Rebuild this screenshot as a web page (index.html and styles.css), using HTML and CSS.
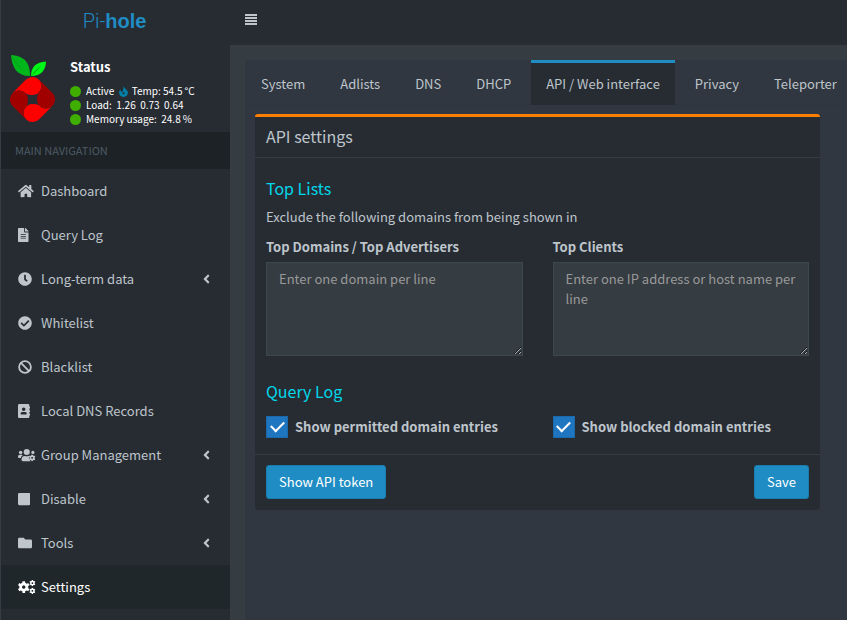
FILE: index.html
```html
<!DOCTYPE html>
<html lang="en">
<head>
<meta charset="utf-8">
<meta name="viewport" content="width=device-width, initial-scale=1">
<title>Pi-hole - Settings</title>
<link rel="stylesheet" href="styles.css">
</head>
<body>
<svg class="defs" aria-hidden="true">
  <symbol id="angle" viewBox="0 0 256 512"><path d="M31.7 239l136-136c9.4-9.4 24.6-9.4 33.9 0l22.6 22.6c9.4 9.4 9.4 24.6 0 33.9L127.9 256l96.4 96.4c9.4 9.4 9.4 24.6 0 33.9L201.7 409c-9.4 9.4-24.6 9.4-33.9 0l-136-136c-9.5-9.4-9.5-24.6-.1-34z"/></symbol>
  <symbol id="gear6" viewBox="-100 -100 200 200">
    <circle r="52" fill="none" stroke="currentColor" stroke-width="46"/>
    <path id="teeth" d="M-22-98h44v40h-44zM-22 58h44v40h-44z"/>
    <use href="#teeth" transform="rotate(60)"/><use href="#teeth" transform="rotate(120)"/>
  </symbol>
</svg>
<aside class="sidebar">
  <a class="logo" href="#">Pi-<b>hole</b></a>
  <section class="user-panel">
    <svg class="pihole" viewBox="0 0 46 68" aria-hidden="true">
      <path fill="#00b61b" d="M21 21C8 21 3 13 2 0c12 1 19 6 19 21z"/>
      <path fill="#008a13" d="M21 21C13 16 7 9 2 0c6 9 11 16 19 21z"/>
      <path fill="#00f615" d="M22 21c0-9 5-14 15-14.500C37 15 32 21 22 21z"/>
      <path fill="#009914" d="M22 21c4-5 7-8 10-10-3 3-6 7-10 10z"/>
      <g transform="translate(23.5 44.5)">
        <path id="petal" fill="#f00" d="M-6.400-19.900A9 9 0 1 1 0-4.500Q-4-4.500-6.500-5.700A9 9 0 0 0-19.900-6.400Z"/>
        <path fill="#f00" transform="rotate(180)" d="M-6.400-19.900A9 9 0 1 1 0-4.500Q-4-4.500-6.500-5.700A9 9 0 0 0-19.900-6.400Z"/>
        <path fill="#a00000" transform="rotate(90)" d="M-6.400-19.900A9 9 0 1 1 0-4.500Q-4-4.500-6.500-5.700A9 9 0 0 0-19.900-6.400Z"/>
        <path fill="#a00000" transform="rotate(270)" d="M-6.400-19.900A9 9 0 1 1 0-4.500Q-4-4.500-6.500-5.700A9 9 0 0 0-19.900-6.400Z"/>
      </g>
    </svg>
    <div class="status">
      <p class="status-title">Status</p>
      <p><i class="dot"></i>Active <svg class="flame" viewBox="0 0 16 20" aria-hidden="true"><path d="M8 0c1 5 8 7 8 12 0 5-3 8-8 8s-8-3-8-8c0-2 1-4 2-5 1 2 1 3 3 4 4-3 2-7 3-11z"/><circle cx="8" cy="13" r="2" fill="#272c33"/></svg> Temp:&nbsp;54.5&thinsp;°C</p>
      <p><i class="dot"></i>Load:&nbsp; 1.26&nbsp; 0.73&nbsp; 0.64</p>
      <p><i class="dot"></i>Memory usage:&nbsp; 24.8&thinsp;%</p>
    </div>
  </section>
  <h2 class="nav-title">MAIN NAVIGATION</h2>
  <nav class="menu">
    <a href="#"><svg viewBox="0 0 576 512"><path d="M280.37 148.26L96 300.11V464a16 16 0 0 0 16 16l112.06-.29a16 16 0 0 0 15.92-16V368a16 16 0 0 1 16-16h64a16 16 0 0 1 16 16v95.64a16 16 0 0 0 16 16.050L464 480a16 16 0 0 0 16-16V300L295.670 148.26a12.190 12.190 0 0 0-15.300 0zM571.600 251.470L488 182.560V44.050a12 12 0 0 0-12-12h-56a12 12 0 0 0-12 12v72.610L318.470 43a48 48 0 0 0-61 0L4.340 251.470a12 12 0 0 0-1.600 16.900l25.500 31A12 12 0 0 0 45.150 301l235.220-193.740a12.190 12.190 0 0 1 15.300 0L530.900 301a12 12 0 0 0 16.900-1.600l25.500-31a12 12 0 0 0-1.700-16.930z"/></svg><span>Dashboard</span></a>
    <a href="#"><svg viewBox="0 0 384 512"><path d="M224 136V0H24C10.700 0 0 10.700 0 24v464c0 13.300 10.700 24 24 24h336c13.300 0 24-10.700 24-24V160H248c-13.200 0-24-10.800-24-24zm64 236c0 6.600-5.400 12-12 12H108c-6.600 0-12-5.400-12-12v-8c0-6.600 5.400-12 12-12h168c6.600 0 12 5.400 12 12v8zm0-64c0 6.600-5.400 12-12 12H108c-6.600 0-12-5.400-12-12v-8c0-6.600 5.400-12 12-12h168c6.600 0 12 5.400 12 12v8zm0-72v8c0 6.600-5.400 12-12 12H108c-6.600 0-12-5.400-12-12v-8c0-6.600 5.400-12 12-12h168c6.600 0 12 5.400 12 12zm96-114.100v6.100H256V0h6.100c6.400 0 12.500 2.500 17 7l97.900 98c4.500 4.500 7 10.600 7 16.900z"/></svg><span>Query Log</span></a>
    <a href="#"><svg viewBox="0 0 512 512"><path d="M256 8C119 8 8 119 8 256s111 248 248 248 248-111 248-248S393 8 256 8zm92.490 313l-20 25a16 16 0 0 1-22.490 2.500l-67-49.720a40 40 0 0 1-15-31.230V112a16 16 0 0 1 16-16h32a16 16 0 0 1 16 16v144l58 42.500a16 16 0 0 1 2.490 22.500z"/></svg><span>Long-term data</span><svg class="angle" viewBox="0 0 256 512"><use href="#angle"/></svg></a>
    <a href="#"><svg viewBox="0 0 512 512"><path d="M504 256c0 136.967-111.033 248-248 248S8 392.967 8 256 119.033 8 256 8s248 111.033 248 248zM227.314 387.314l184-184c6.248-6.248 6.248-16.379 0-22.627l-22.627-22.627c-6.248-6.249-16.379-6.249-22.628 0L216 308.118l-70.059-70.059c-6.248-6.248-16.379-6.248-22.628 0l-22.627 22.627c-6.248 6.248-6.248 16.379 0 22.627l104 104c6.249 6.249 16.379 6.249 22.628.001z"/></svg><span>Whitelist</span></a>
    <a href="#"><svg viewBox="0 0 512 512"><g fill="none" stroke="currentColor" stroke-width="66"><circle cx="256" cy="256" r="215"/><path d="M108 108l296 296"/></g></svg><span>Blacklist</span></a>
    <a href="#"><svg viewBox="0 0 448 512"><path d="M436 160c6.600 0 12-5.400 12-12v-40c0-6.600-5.400-12-12-12h-20V48c0-26.500-21.500-48-48-48H48C21.500 0 0 21.500 0 48v416c0 26.500 21.500 48 48 48h320c26.500 0 48-21.500 48-48v-48h20c6.600 0 12-5.400 12-12v-40c0-6.600-5.400-12-12-12h-20v-64h20c6.600 0 12-5.400 12-12v-40c0-6.600-5.400-12-12-12h-20v-64h20zm-228-32c35.300 0 64 28.700 64 64s-28.700 64-64 64-64-28.700-64-64 28.700-64 64-64zm112 236.800c0 10.600-10 19.200-22.400 19.200H118.400C106 384 96 375.400 96 364.800v-19.200c0-31.800 30.100-57.600 67.200-57.600h5c12.300 5.100 25.700 8 39.800 8s27.600-2.900 39.800-8h5c37.100 0 67.200 25.800 67.200 57.600v19.200z"/></svg><span>Local DNS Records</span></a>
    <a href="#"><svg viewBox="0 0 640 512"><circle cx="96" cy="160" r="64"/><circle cx="320" cy="144" r="112"/><circle cx="544" cy="160" r="58"/><path d="M0 320c0-40 25-72 64-72h64c20 0 35 6 47 18-43 24-65 60-70 102H32c-18 0-32-14-32-32zM128 432c0-85 45-144 115-144h8c45 21 93 21 138 0h15c-12 60-5 105 20 140 10 20 25 36 45 52H176c-26 0-48-22-48-48z"/><use href="#gear6" x="392" y="236" width="250" height="250"/></svg><span>Group Management</span><svg class="angle" viewBox="0 0 256 512"><use href="#angle"/></svg></a>
    <a href="#"><svg viewBox="0 0 448 512"><rect y="32" width="448" height="448" rx="48"/></svg><span>Disable</span><svg class="angle" viewBox="0 0 256 512"><use href="#angle"/></svg></a>
    <a href="#"><svg viewBox="0 0 512 512"><path d="M464 128H272l-64-64H48C21.490 64 0 85.490 0 112v288c0 26.510 21.490 48 48 48h416c26.510 0 48-21.490 48-48V176c0-26.510-21.490-48-48-48z"/></svg><span>Tools</span><svg class="angle" viewBox="0 0 256 512"><use href="#angle"/></svg></a>
    <a href="#" class="active"><svg viewBox="0 0 640 512"><use href="#gear6" x="-10" y="40" width="440" height="440"/><use href="#gear6" x="410" y="-4" width="232" height="232"/><use href="#gear6" x="410" y="284" width="232" height="232"/></svg><span>Settings</span></a>
  </nav>
</aside>
<div class="page">
  <header class="topbar">
    <button class="toggle" type="button" aria-label="Toggle navigation"><i></i><i></i><i></i><i></i></button>
  </header>
  <main class="content">
    <nav class="tabs">
      <a href="#">System</a><a href="#">Adlists</a><a href="#">DNS</a><a href="#">DHCP</a><a href="#" class="active">API / Web interface</a><a href="#">Privacy</a><a href="#">Teleporter</a>
    </nav>
    <form class="box">
      <h3 class="box-title">API settings</h3>
      <div class="box-body">
        <h4>Top Lists</h4>
        <p>Exclude the following domains from being shown in</p>
        <div class="columns lists">
          <div><label for="domains">Top Domains / Top Advertisers</label><textarea id="domains" placeholder="Enter one domain per line"></textarea></div>
          <div><label for="clients">Top Clients</label><textarea id="clients" placeholder="Enter one IP address or host name per line"></textarea></div>
        </div>
        <h4>Query Log</h4>
        <div class="columns">
          <div class="check"><input type="checkbox" id="permitted" checked><label for="permitted">Show permitted domain entries</label></div>
          <div class="check"><input type="checkbox" id="blocked" checked><label for="blocked">Show blocked domain entries</label></div>
        </div>
      </div>
      <footer class="box-footer">
        <button type="button">Show API token</button>
        <button type="submit">Save</button>
      </footer>
    </form>
  </main>
</div>
</body>
</html>
```
FILE: styles.css
```css
* { box-sizing: border-box; }
body {
  margin: 0;
  min-height: 100vh;
  display: flex;
  overflow: hidden;
  background: #353c42;
  color: #bec5cb;
  font: 13px/20px "Noto Sans CJK SC", sans-serif;
}
h2, h3, h4, p { margin: 0; font-weight: 400; }
a { color: inherit; text-decoration: none; }
button, textarea { font: inherit; }
svg { fill: currentColor; }
.defs { position: absolute; width: 0; height: 0; }

.sidebar {
  flex: 0 0 230px;
  background: #272c33;
  border-left: 1px solid #353c42;
}
.logo {
  display: block;
  height: 45px;
  padding-right: 2px;
  line-height: 43px;
  text-align: center;
  color: #1f8dc4;
  font-family: Roboto, sans-serif;
  font-size: 20px;
  font-weight: 300;
}
.logo b { font-family: "Liberation Sans", sans-serif; font-weight: 700; }
.user-panel { display: flex; gap: 15px; height: 87px; padding: 10px 8px; }
.pihole { width: 46px; height: 68px; }
.status { color: #fff; font-size: 10px; line-height: 14px; }
.status p { display: flex; align-items: center; white-space: pre; }
.status .status-title { font-size: 13px; font-weight: 700; line-height: 24px; margin-bottom: 5px; }
.dot { width: 11px; height: 11px; margin-right: 5px; border-radius: 50%; background: #3fae00; }
.flame { width: 9px; height: 11px; margin: 0 2px; color: #0080a8; }
.nav-title {
  padding: 9px 14px;
  background: #1d2226;
  color: #4c5a64;
  font-size: 11px;
  line-height: 19px;
}
.menu a {
  display: grid;
  grid-template-columns: 23px 1fr auto;
  align-items: center;
  justify-items: start;
  height: 44px;
  padding: 0 20px 0 17px;
}
.menu svg { height: 14px; }
.menu .active { background: #20272a; color: #fff; }

.page { flex: 1; min-width: 0; display: flex; flex-direction: column; }
.topbar { height: 45px; padding: 14px 15px; background: #272c33; }
.toggle {
  display: grid;
  gap: 1px;
  padding: 0;
  border: 0;
  background: none;
}
.toggle i { width: 12px; height: 2px; background: #bec5cb; }
.content { flex: 1; margin: 15px 0 0 15px; background: #303740; border-radius: 3px 0 0; }
.tabs { display: flex; gap: 5px; height: 45px; padding-left: 1px; border-bottom: 1px solid #2e353c; }
.tabs a {
  height: 45px;
  padding: 11px 15px;
  border-top: 3px solid transparent;
  white-space: nowrap;
}
.tabs .active { background: #272c33; border-top-color: #1f8dc4; }
.box {
  margin: 9px 27px 0 10px;
  background: #272c33;
  border-top: 3px solid #ff8000;
  border-radius: 3px;
}
.box-title { padding: 9px 11px 11px; border-bottom: 1px solid #353c42; font-size: 16px; }
.box-body { padding: 20px 11px 16px; }
.box h4 { color: #00d8ea; font-size: 16px; margin-bottom: 9px; }
.columns { display: grid; grid-template-columns: 1fr 1fr; gap: 30px; }
.lists { margin: 10px 0 25px; }
label { display: block; font-weight: 700; }
textarea {
  display: block;
  width: 100%;
  height: 94px;
  margin-top: 5px;
  padding: 6px 12px;
  background: #353c42;
  border: 1px solid #3d474e;
  color: #bec5cb;
  resize: vertical;
}
textarea::placeholder { color: #999; }
.check { display: flex; align-items: center; gap: 7px; padding-top: 6px; }
.check input {
  appearance: none;
  display: grid;
  place-items: center;
  width: 22px;
  height: 22px;
  margin: 0;
  background: #1f76c0;
  border: 1px solid #1b68aa;
}
.check input:checked::after {
  content: "";
  width: 11px;
  height: 6px;
  margin-bottom: 4px;
  border: solid #fff;
  border-width: 0 0 2px 2px;
  transform: rotate(-45deg);
}
.box-footer {
  display: flex;
  justify-content: space-between;
  padding: 10px 11px 11px;
  border-top: 1px solid #353c42;
}
.box-footer button {
  height: 34px;
  padding: 0 12px;
  background: #1f8dc4;
  border: 1px solid #1b7dae;
  border-radius: 3px;
  color: #fff;
}
```
